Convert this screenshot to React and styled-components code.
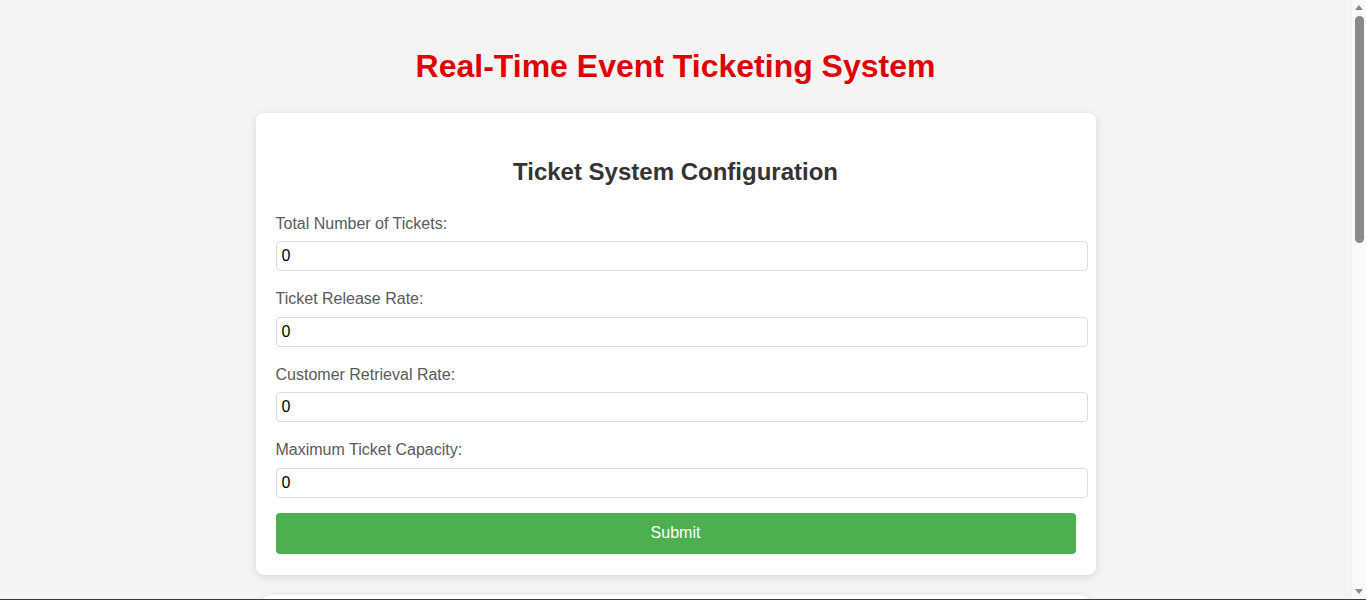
import React from "react";
import styled, { createGlobalStyle } from "styled-components";

const Global = createGlobalStyle`
  html, body { margin: 0; padding: 0; overflow: hidden; }
  body {
    background: #f4f4f4;
    font-family: "Liberation Sans", Arial, sans-serif;
  }
  * { box-sizing: border-box; }
`;

const Frame = styled.div`
  display: flex;
  height: 100vh;
  border-bottom: 1px solid #3a3a3a;
`;

const Viewport = styled.main`
  flex: 1;
  min-width: 0;
  overflow: hidden;
`;

const Scrollbar = styled.div`
  width: 15px;
  flex: none;
  display: flex;
  flex-direction: column;
  align-items: center;
  background: #f9f9f9;
  border-left: 1px solid #f0f0f0;
`;

const Arrow = styled.div`
  flex: none;
  width: 0;
  height: 0;
  margin: ${(p) => (p.$down ? "3px 0 5px" : "5px 0 3px")};
  border-left: 4.5px solid transparent;
  border-right: 4.5px solid transparent;
  ${(p) =>
    p.$down
      ? "border-top: 5px solid #8a8a8a;"
      : "border-bottom: 5px solid #8a8a8a;"}
`;

const Track = styled.div`
  flex: 1;
  width: 100%;
  display: flex;
  justify-content: center;
  padding-top: 3px;
`;

const Thumb = styled.div`
  width: 9px;
  height: 227px;
  border-radius: 5px;
  background: #8a8a8a;
`;

const Page = styled.div`
  padding: 48px 0 40px;
`;

const Title = styled.h1`
  margin: 0 0 28px;
  text-align: center;
  color: #e00000;
  font-size: 32px;
  line-height: 37px;
  font-weight: bold;
`;

const Card = styled.div`
  width: ${(p) => p.$width}px;
  margin: 0 auto ${(p) => p.$mb || 0}px;
  background: #fff;
  border-radius: 8px;
  box-shadow: 0 2px 8px rgba(0, 0, 0, 0.12);
  padding: 20px 20px 21px;
  min-height: ${(p) => p.$minHeight || 0}px;
`;

const Heading = styled.h2`
  margin: 25px 0 25px;
  text-align: center;
  color: #333;
  font-size: 24px;
  line-height: 28px;
  font-weight: bold;
`;

const Field = styled.div`
  margin-bottom: 15px;
`;

const Label = styled.label`
  display: block;
  padding-top: 4px;
  margin-bottom: 8px;
  color: #5a5a5a;
  font-size: 16px;
  line-height: 18.4px;
`;

const Input = styled.input`
  display: block;
  width: calc(100% + 12px);
  padding: 5px;
  border: 1px solid #ddd;
  border-radius: 4px;
  font-family: "Liberation Sans", Arial, sans-serif;
  font-size: 16px;
  line-height: 18px;
  height: 30px;
  color: #000;
  background: #fff;
  outline: none;
`;

const Button = styled.button`
  display: block;
  width: 100%;
  height: 41px;
  border: none;
  border-radius: 4px;
  background: #4caf50;
  color: #fff;
  font-family: "Liberation Sans", Arial, sans-serif;
  font-size: 16px;
  cursor: pointer;
`;

const fields = [
  "Total Number of Tickets:",
  "Ticket Release Rate:",
  "Customer Retrieval Rate:",
  "Maximum Ticket Capacity:",
];

export default function App() {
  return (
    <>
      <Global />
      <Frame>
        <Viewport>
          <Page>
            <Title>Real-Time Event Ticketing System</Title>
            <Card $width={840} $mb={20}>
              <Heading>Ticket System Configuration</Heading>
              {fields.map((f, i) => (
                <Field key={i}>
                  <Label htmlFor={`f${i}`}>{f}</Label>
                  <Input id={`f${i}`} type="number" defaultValue={0} />
                </Field>
              ))}
              <Button type="button">Submit</Button>
            </Card>
            <Card $width={827} $minHeight={300} />
          </Page>
        </Viewport>
        <Scrollbar aria-hidden="true">
          <Arrow />
          <Track>
            <Thumb />
          </Track>
          <Arrow $down />
        </Scrollbar>
      </Frame>
    </>
  );
}
